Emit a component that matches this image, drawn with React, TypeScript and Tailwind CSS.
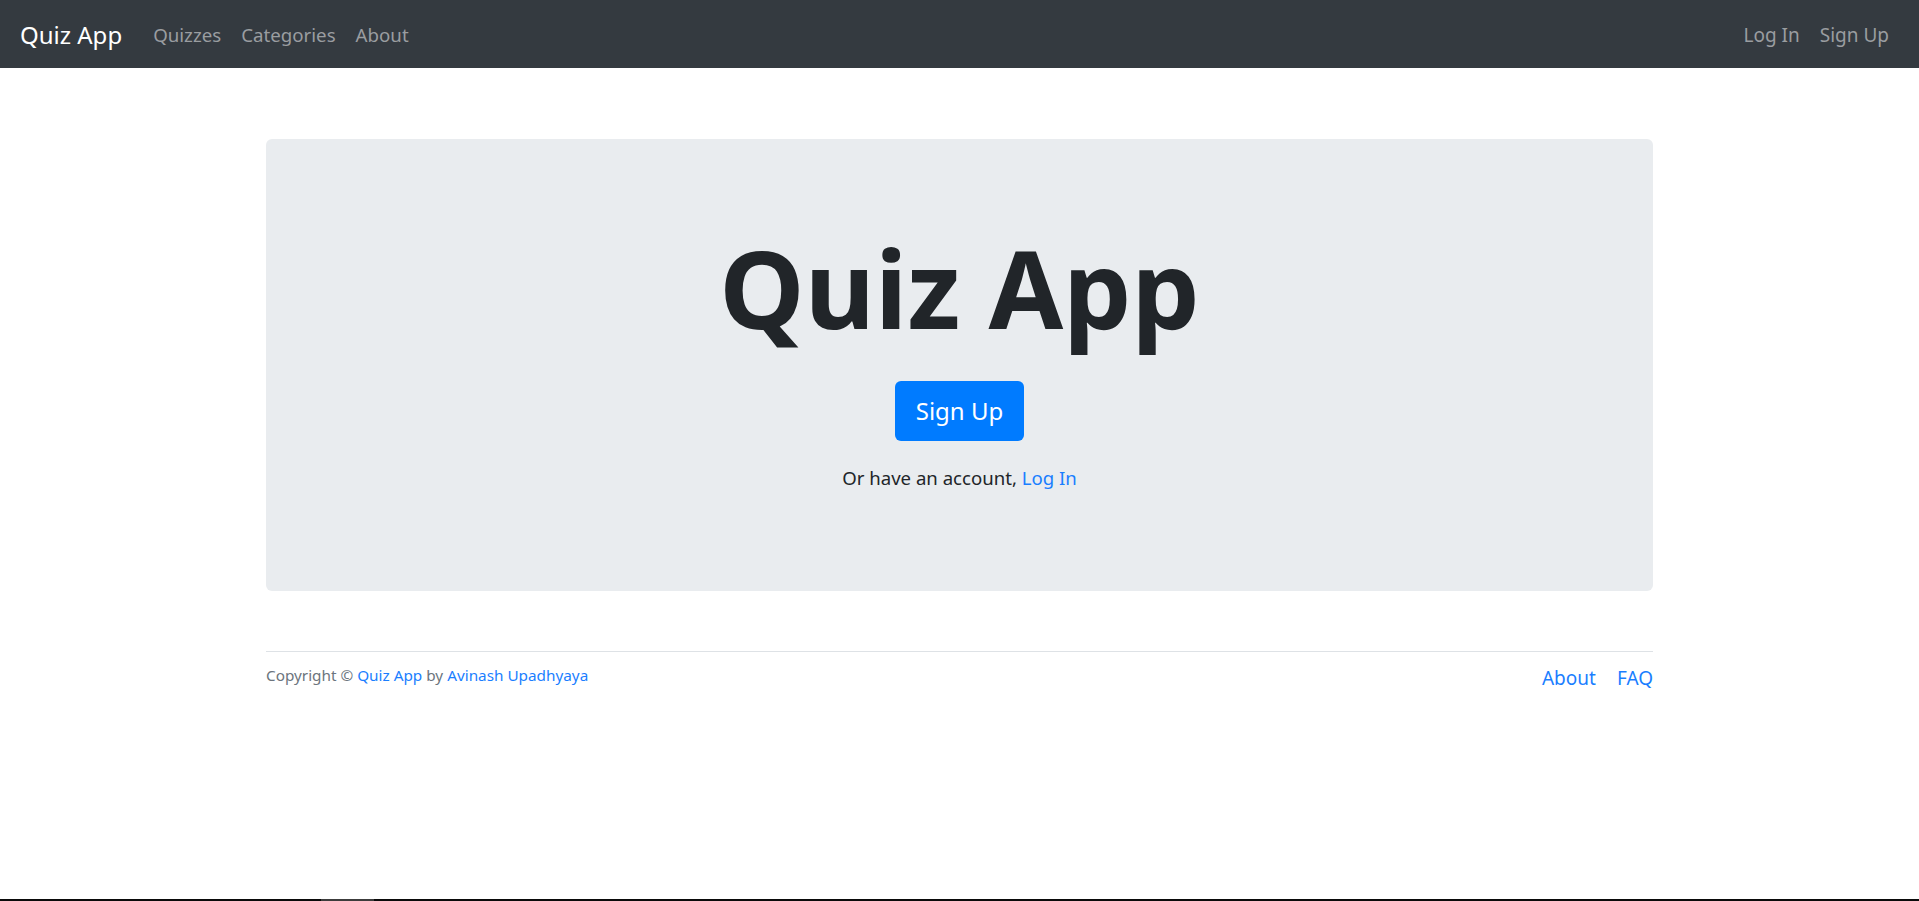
import React from "react";

export default function App() {
  const font = { fontFamily: '"Noto Sans", "Open Sans", sans-serif' };
  return (
    <div className="min-h-[901px] flex flex-col bg-white text-[#212529]" style={font}>
      <nav className="h-[68px] bg-[#343a40] flex items-center pl-[20px] pr-[20px] pt-[2px]">
        <a className="text-white text-[24px] leading-[30px] mr-[21px]">Quiz App</a>
        <a className="text-[#9a9da0] text-[18.7px] px-[10px]">Quizzes</a>
        <a className="text-[#9a9da0] text-[18.7px] px-[10px]">Categories</a>
        <a className="text-[#9a9da0] text-[18.7px] px-[10px]">About</a>
        <div className="ml-auto flex">
          <a className="text-[#9a9da0] text-[19px] px-[10px]">Log In</a>
          <a className="text-[#9a9da0] text-[19px] px-[10px]">Sign Up</a>
        </div>
      </nav>
      <main className="w-[1387px] mx-auto mt-[71px]">
        <section className="h-[452px] rounded-[6px] bg-[#e9ecef] flex flex-col items-center pt-[95px]">
          <h1 className="text-[108px] leading-none font-bold text-[#212529]">Quiz App</h1>
          <button className="mt-[39px] w-[129px] h-[60px] rounded-[6px] bg-[#007bff] text-white text-[24px] flex items-center justify-center">
            Sign Up
          </button>
          <p className="mt-[23px] text-[18.6px] leading-[27px] text-[#212529]">
            Or have an account, <a className="text-[#1a7eff]">Log In</a>
          </p>
        </section>
        <footer className="mt-[60px] border-t border-[#dee2e6] pt-[12px] flex items-start justify-between">
          <p className="text-[15.3px] leading-[22px] text-[#6c757d]">
            Copyright © <a className="text-[#1a7eff]">Quiz App</a> by{" "}
            <a className="text-[#1a7eff]">Avinash Upadhyaya</a>
          </p>
          <div className="flex gap-[21px] text-[19px] leading-[28px] text-[#1a7eff]">
            <a>About</a>
            <a>FAQ</a>
          </div>
        </footer>
      </main>
      <div className="mt-auto h-[2px] bg-[#0a0a0a] flex">
        <div className="ml-[321px] w-[53px] h-full bg-[#3c3c3c]" />
      </div>
    </div>
  );
}
